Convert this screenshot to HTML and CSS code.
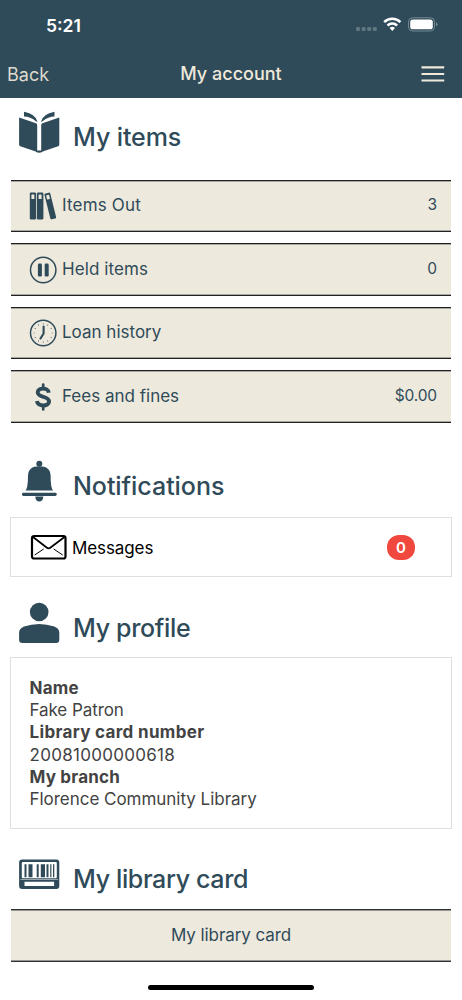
FILE: index.html
```html
<!DOCTYPE html>
<html lang="en">
<head>
<meta charset="utf-8">
<meta name="viewport" content="width=device-width, initial-scale=1">
<title>My account</title>
<link rel="stylesheet" href="styles.css">
</head>
<body>
<header class="top">
  <div class="status">
    <span class="time">5:21</span>
    <svg class="signals" width="84" height="20" viewBox="0 0 84 20">
      <g fill="#5f7681"><rect x="1" y="12" width="4" height="4" rx="1.3"/><rect x="6.6" y="12" width="4" height="4" rx="1.3"/><rect x="12.2" y="12" width="4" height="4" rx="1.3"/><rect x="17.8" y="12" width="4" height="4" rx="1.3"/></g>
      <g fill="none" stroke="#fff" stroke-width="2.5"><path d="M29.2 7.200a11.400 11.400 0 0 1 16.200 0"/><path d="M32.500 10.500a6.800 6.800 0 0 1 9.600 0"/></g>
      <path fill="#fff" d="M34.600 13.100a3.800 3.800 0 0 1 5.400 0L37.300 16z"/>
      <rect x="53.500" y="2.800" width="26" height="13.200" rx="4" fill="none" stroke="#758993"/>
      <rect x="55.200" y="4.500" width="22.600" height="9.800" rx="2.600" fill="#fff"/>
      <path fill="#758993" d="M81 7.300q1.600.5 1.600 2T81 11.300z"/>
    </svg>
  </div>
  <nav class="nav">
    <span class="back">Back</span>
    <h1 class="title">My account</h1>
    <svg class="menu" width="24" height="18" viewBox="0 0 24 18"><path fill="#efe9dc" d="M.5 1.300h22.700v2.100H.5zM.5 7.900h22.700v2.100H.5zM.5 14.500h22.700v2.100H.5z"/></svg>
  </nav>
</header>
<main class="content">
  <section class="section items">
    <div class="heading">
      <svg class="heading-icon" width="42" height="42" viewBox="0 0 42 42" fill="#2f4b59">
        <path d="M1.100 6.500 18 12.300q1.200.5 1.200 1.800V41L2.200 35.200Q1.100 34.700 1.100 33.600z"/><path d="M41.300 6.500 24.400 12.300q-1.200.5-1.200 1.800V41L40.200 35.200q1.100-.5 1.100-1.600z"/>
        <path d="M18 39.500h6.400V41Q21 42.300 18 41z"/>
        <path d="M6 .8Q17.800 3 19.600 10.900L17.500 10Q12.500 5.800 6 5.600zM36.500.8Q24.700 3 22.900 10.900L25 10Q30 5.800 36.500 5.600z"/>
      </svg>
      <h2 class="heading-text h-items">My items</h2>
    </div>
    <div class="rows">
      <div class="row">
        <svg class="row-icon" width="28" height="28" viewBox="0 0 28 28">
          <g fill="#2f4b59"><rect x=".8" y=".5" width="6.300" height="27" rx="1.300"/><rect x="7.900" y=".5" width="6.500" height="27" rx="1.300"/><rect x="-3" y="-13.300" width="6" height="26.600" rx="1.300" transform="translate(21.300 14) rotate(-14)"/></g>
          <g fill="#eee9dd"><rect x="2.400" y="2.600" width="3" height="4.400" rx=".5"/><rect x="9.600" y="2.600" width="3" height="4.400" rx=".5"/><rect x="-1.500" y="-11.300" width="3" height="4.400" rx=".5" transform="translate(21.300 14) rotate(-14)"/></g>
        </svg>
        <span class="row-label l-out">Items Out</span><span class="row-value">3</span>
      </div>
      <div class="row">
        <svg class="row-icon" width="28" height="28" viewBox="0 0 28 28"><circle cx="14.200" cy="14" r="12.700" fill="none" stroke="#2f4b59" stroke-width="1.500"/><rect x="8.900" y="7.600" width="4" height="13" rx="1.300" fill="#2f4b59"/><rect x="15.700" y="7.600" width="4" height="13" rx="1.300" fill="#2f4b59"/></svg>
        <span class="row-label l-held">Held items</span><span class="row-value">0</span>
      </div>
      <div class="row">
        <svg class="row-icon" width="28" height="28" viewBox="0 0 28 28" fill="none" stroke="#2f4b59"><circle cx="14.200" cy="14" r="12.700" stroke-width="1.500"/><circle cx="14.200" cy="14" r="9.200" stroke-width="1.200" pathLength="120" stroke-dasharray="1.400 8.600" stroke-dashoffset=".7"/><path d="M14.600 7.500V14.500L11.500 19.500" stroke-width="2.100" stroke-linecap="round" stroke-linejoin="round"/></svg>
        <span class="row-label l-loan">Loan history</span>
      </div>
      <div class="row">
        <svg class="row-icon" width="28" height="28" viewBox="0 0 28 28" fill="none" stroke="#2f4b59"><path d="M19.800 9.700C19.300 4.300 8.700 4.300 8.700 9.300C8.700 15.300 20.100 12.300 20.100 18.500C20.100 23.900 8.400 23.900 8 18" stroke-width="3.900"/><path d="M14.200 1.500V5.500M14.200 22.500V26.500" stroke-width="2.700" stroke-linecap="round"/></svg>
        <span class="row-label l-fees">Fees and fines</span><span class="row-value money">$0.00</span>
      </div>
    </div>
  </section>
  <section class="section notifications">
    <div class="heading">
      <svg class="heading-icon" width="42" height="42" viewBox="0 0 42 42" fill="#2f4b59"><circle cx="21.300" cy="3.800" r="3"/><path d="M7.500 30.500Q10 28 10 16Q10 6.300 21.300 6.300T32.600 16q0 12 2.500 14.500z"/><rect x="4" y="32.700" width="34.700" height="3.200" rx="1.400"/><path d="M17.300 36.500h8q-.3 5-4 5t-4-5z"/></svg>
      <h2 class="heading-text h-notifications">Notifications</h2>
    </div>
    <div class="card messages">
      <svg class="envelope" width="38" height="26" viewBox="0 0 38 26" fill="none" stroke="#000"><rect x="2" y="2" width="33.500" height="22.500" rx="2" stroke-width="2.200"/><path d="m3 3 13.600 10.500q2 1.600 4 0L34.500 3" stroke-width="1.700"/><path d="m4.700 21 9-6M32.700 21 23.700 15" stroke-width="1"/></svg>
      <span class="message-label">Messages</span>
      <span class="badge">0</span>
    </div>
  </section>
  <section class="section profile">
    <div class="heading">
      <svg class="heading-icon" width="42" height="42" viewBox="0 0 42 42" fill="#2f4b59"><circle cx="21.200" cy="10" r="9.300"/><path d="M1.100 30.500Q1.100 26.500 6 24.500Q21 19.500 36.400 24.500Q41.300 26.500 41.300 30.500V38q0 3-3.200 3H4.300Q1.100 41 1.100 38z"/></svg>
      <h2 class="heading-text h-profile">My profile</h2>
    </div>
    <dl class="card details">
      <dt class="t-name">Name</dt><dd class="d-name">Fake Patron</dd>
      <dt class="t-card">Library card number</dt><dd class="d-number">20081000000618</dd>
      <dt class="t-branch">My branch</dt><dd class="d-branch">Florence Community Library</dd>
    </dl>
  </section>
  <section class="section library">
    <div class="heading">
      <svg class="heading-icon" width="42" height="31" viewBox="0 0 42 31"><rect x="1.100" y=".5" width="40.200" height="29.500" rx="3" fill="#2f4b59"/><rect x="3.800" y="3" width="35" height="16.200" rx="1" fill="#fff"/><path fill="#2f4b59" d="M6.500 5.200h2v13h-2zM10.500 5.200h4v13h-4zM18.700 5.200h2v13h-2zM22.800 5.200h4.200v13h-4.200zM28.500 5.200h2v13h-2zM32.200 5.200h1.200v13h-1.200zM35 5.200h1.300v13H35z"/><path fill="#fff" d="M2.300 20.400h37.800v.7H2.300zM6.500 22.800h29.600v4.300H6.500z"/></svg>
      <h2 class="heading-text h-card">My library card</h2>
    </div>
    <button class="library-button" type="button"><span class="button-label">My library card</span></button>
  </section>
</main>
<footer class="home"><div class="home-bar"></div></footer>
</body>
</html>
```

FILE: styles.css
```css
* { box-sizing: border-box; }
body { margin: 0; width: 462px; height: 1000px; overflow: hidden; background: #fff; color: #2f4b59; font-family: Inter, "Liberation Sans", sans-serif; font-size: 17px; display: flex; flex-direction: column; }
svg { display: block; flex: none; }
.top { height: 98.400px; background: #2f4b59; flex: none; }
.status { height: 50px; display: flex; justify-content: space-between; padding: 15px 23px 0 46px; }
.time { color: #fff; font-size: 17.500px; font-weight: 600; line-height: 22px; }
.signals { margin-top: 0; }
.nav { height: 48px; display: grid; grid-template-columns: 1fr auto 1fr; align-items: center; padding: 0 17px 0 7px; color: #efe9dc; }
.back { font-size: 18px; color: #ddd9ce; }
.title { margin: 0; padding-left: 10px; font-size: 18px; font-weight: 500; line-height: 24px; }
.menu { justify-self: end; }
.content { flex: none; height: 878px; padding: 0 11px; }
.heading { display: flex; align-items: flex-start; gap: 13px; padding-left: 7px; }
.heading-text { margin: 0; font-size: 25px; line-height: 32px; font-weight: 500; white-space: nowrap; }
.h-items { letter-spacing: -.1px; }
.h-notifications { letter-spacing: -.050px; }
.h-profile { letter-spacing: -.330px; }
.h-card { letter-spacing: -.360px; }
.items { height: 362px; padding-top: 13px; }
.items .heading { height: 68.600px; }
.items .heading-text { margin-top: 10px; }
.rows { display: grid; gap: 11px; }
.row { height: 52.500px; background: #eee9dd; border-top: 1px solid #202124; border-bottom: 1px solid #202124; box-shadow: inset 0 1px #aaa79f, inset 0 -1px #aaa79f; display: flex; align-items: center; padding: 0 14px 1px 18px; }
.row-icon { margin-top: 1px; }
.row-label { margin-left: 5px; margin-top: -1px; font-size: 17px; line-height: 24px; white-space: nowrap; }
.l-out { letter-spacing: .170px; }
.l-held { letter-spacing: .100px; }
.row-value { margin-left: auto; margin-top: -1px; font-size: 15.500px; line-height: 24px; }
.money { letter-spacing: -.150px; }
.notifications { height: 142px; }
.notifications .heading { height: 57px; }
.notifications .heading-text { margin-top: 10px; }
.card { margin: 0 -1px; border: 1px solid #dedfe0; background: #fff; }
.messages { height: 60px; display: flex; align-items: center; padding: 0 36px 0 19px; color: #000; }
.envelope { margin-top: -1px; }
.message-label { margin-left: 4px; letter-spacing: -.100px; margin-top: 1px; }
.badge { margin-left: auto; width: 28px; height: 25px; border-radius: 12px; background: #f0483e; color: #fff; display: flex; align-items: center; justify-content: center; font-size: 15px; font-weight: 600; margin-top: 1px; }
.profile { height: 256.500px; }
.profile .heading { height: 54.800px; }
.profile .heading-text { margin-top: 10px; }
.details { height: 172px; padding: 18.500px; color: #434343; font-size: 17px; line-height: 22.300px; }
.details dt { font-weight: 700; width: max-content; }
.details dd { margin: 0; width: max-content; }
.t-name { letter-spacing: .250px; }
.t-card { letter-spacing: .330px; }
.t-branch { letter-spacing: .200px; }
.d-name { letter-spacing: -.080px; }
.d-number { letter-spacing: .290px; }
.d-branch { letter-spacing: -.030px; }
.library .heading { height: 50px; }
.library .heading-text { margin-top: 4px; }
.library-button { width: 440px; height: 53px; padding: 0; border: 0 solid #303336; border-width: 1px 0; box-shadow: inset 0 1px #96948d, inset 0 -1px #96948d; background: #eee9dd; color: #2f4b59; font: inherit; line-height: 24px; letter-spacing: -.080px; }
.home { display: flex; justify-content: center; }
.home-bar { width: 166px; height: 5px; border-radius: 3px; background: #000; margin-top: 9px; }
```
